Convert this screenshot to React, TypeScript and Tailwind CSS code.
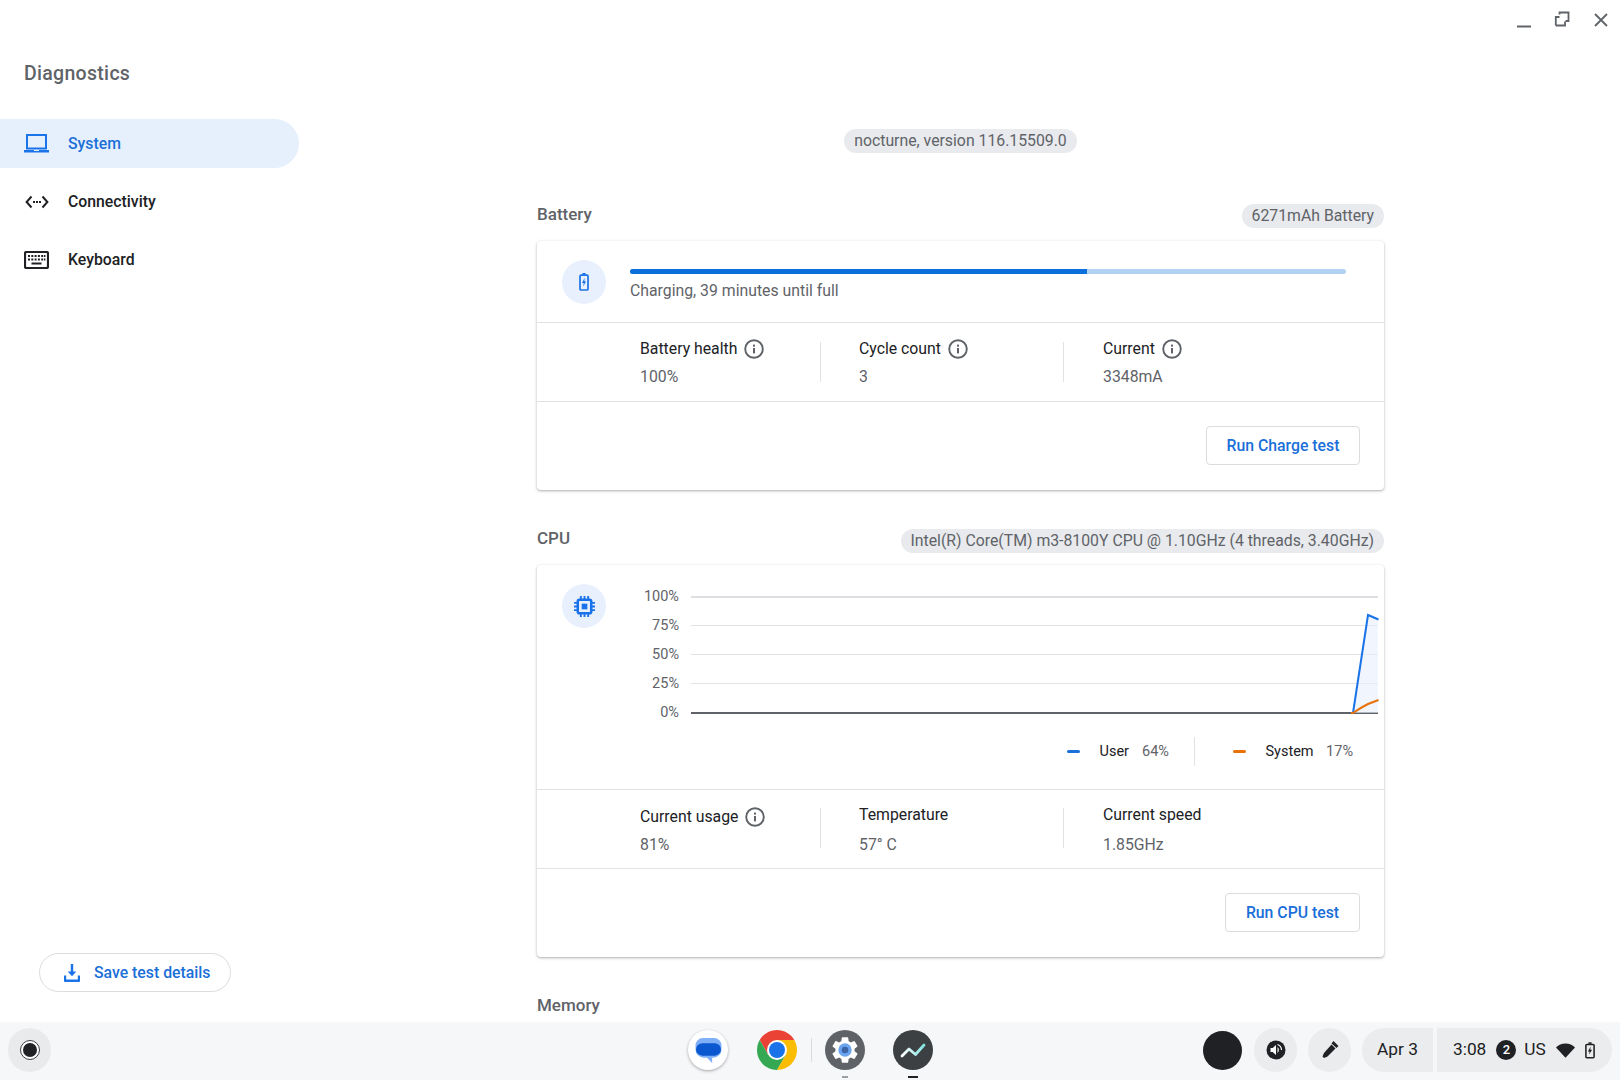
import React from "react";

const Info = ({ className = "" }: { className?: string }) => (
  <svg viewBox="0 0 20 20" className={`w-[20px] h-[20px] ${className}`} fill="none">
    <circle cx="10" cy="10" r="8.800" stroke="#5f6368" strokeWidth="1.900" />
    <rect x="9" y="9" width="2" height="5.400" fill="#5f6368" />
    <rect x="9" y="5.600" width="2" height="2" fill="#5f6368" />
  </svg>
);

const Stat = ({ label, value, info, w, labelShift, top }: { label: string; value: string; info?: boolean; w: string; labelShift?: boolean; top: string }) => (
  <div className={`${w} ${top} flex flex-col`}>
    <div className={`flex items-center gap-[7px] h-[20px] text-[15.8px] text-[#202124] ${labelShift ? "mt-[-2px] mb-[2px]" : ""}`}>
      <span>{label}</span>
      {info && <Info />}
    </div>
    <div className="mt-[8px] h-[20px] flex items-center text-[15.8px] text-[#5f6368]">{value}</div>
  </div>
);

const Rule = ({ className = "" }: { className?: string }) => <div className={`w-[1px] h-[40px] bg-[#e0e2e5] shrink-0 ${className}`} />;

const Chip = ({ children }: { children: React.ReactNode }) => (
  <div className="h-[24px] px-[10px] flex items-center rounded-full bg-[#e8eaed] text-[15.8px] text-[#5f6368]">{children}</div>
);

const RunButton = ({ children, w }: { children: React.ReactNode; w: string }) => (
  <div className={`${w} h-[39px] flex items-center justify-center rounded-[4px] border border-[#dadce0] bg-white text-[15.8px] font-medium text-[#1a6fd8]`}>
    {children}
  </div>
);

const IconCircle = ({ children }: { children: React.ReactNode }) => (
  <div className="w-[44px] h-[44px] rounded-full bg-[#e8f0fe] flex items-center justify-center shrink-0">{children}</div>
);

const Section = ({ title, chip, mt, shift }: { title: string; chip: string; mt: string; shift: string }) => (
  <div className={`${mt} h-[24px] flex items-center justify-between`}>
    <div className={`text-[17px] font-medium text-[#5f6368] ${shift}`}>{title}</div>
    <Chip>{chip}</Chip>
  </div>
);

const gridRows = [
  { l: "100%", c: "bg-[#dcdee1] h-[2px]" },
  { l: "75%", c: "bg-[#e0e2e5] h-[1px]" },
  { l: "50%", c: "bg-[#e0e2e5] h-[1px]" },
  { l: "25%", c: "bg-[#e0e2e5] h-[1px]" },
  { l: "0%", c: "bg-[#5f6368] h-[2px]" },
];

const NavItem = ({ icon, label, active }: { icon: React.ReactNode; label: string; active?: boolean }) => (
  <div className={`h-[49px] w-[299px] flex items-center pl-[24px] rounded-r-full text-[15.8px] font-medium ${active ? "bg-[#e6f0fc] text-[#1a6fd8]" : "text-[#202124]"}`}>
    <div className="w-[25px] h-[24px] flex items-center justify-center shrink-0">{icon}</div>
    <span className="ml-[19px] mt-[1px]">{label}</span>
  </div>
);

export default function App() {
  return (
    <div className="w-[1620px] h-[1080px] flex flex-col overflow-hidden bg-white font-[family-name:Roboto]">
      <div className="flex h-[1022px] overflow-hidden">
        {/* Sidebar */}
        <aside className="w-[300px] shrink-0 flex flex-col">
          <div className="pl-[24px] pt-[61px] h-[119px] text-[19.5px] font-medium text-[#5f6368] tracking-[0.3px] leading-[26px]">Diagnostics</div>
          <div className="flex flex-col gap-[9px]">
            <NavItem
              active
              label="System"
              icon={
                <svg viewBox="0 0 25 19" className="w-[25px] h-[19px]" fill="none">
                  <rect x="3" y="1" width="19" height="13.500" stroke="#1a73e8" strokeWidth="2" />
                  <path d="M0 16h10v1h5v-1h10v2.600H0z" fill="#1a73e8" />
                </svg>
              }
            />
            <NavItem
              label="Connectivity"
              icon={
                <svg viewBox="0 0 24 14" className="w-[24px] h-[14px]" fill="none">
                  <path d="M6.500 1.500 1.600 7l4.900 5.500M17.500 1.500 22.400 7l-4.900 5.500" stroke="#202124" strokeWidth="2" />
                  <rect x="8" y="6" width="2" height="2" fill="#202124" />
                  <rect x="11" y="6" width="2" height="2" fill="#202124" />
                  <rect x="14" y="6" width="2" height="2" fill="#202124" />
                </svg>
              }
            />
            <NavItem
              label="Keyboard"
              icon={
                <svg viewBox="0 0 25 18" className="w-[25px] h-[18px]" fill="none">
                  <rect x="1" y="1" width="23" height="16" rx="1.500" stroke="#202124" strokeWidth="2.200" />
                  <path d="M4 4h2v2H4zM7.300 4h2v2h-2zM10.600 4h2v2h-2zM13.900 4h2v2h-2zM17.200 4h2v2h-2zM20 4h1.400v2H20zM4 7.400h2v2H4zM7.300 7.400h2v2h-2zM10.600 7.400h2v2h-2zM13.900 7.400h2v2h-2zM17.200 7.400h2v2h-2zM20 7.400h1.400v2H20zM7.500 11.600h10v2h-10z" fill="#202124" />
                </svg>
              }
            />
          </div>
          <div className="mt-auto mb-[30px] ml-[39px] w-[192px] h-[39px] rounded-full border border-[#dadce0] flex items-center pl-[24px] text-[15.8px] font-medium text-[#1a6fd8]">
            <svg viewBox="0 0 16 18" className="w-[16px] h-[18px]" fill="#1a73e8">
              <path d="M6.800 0h2.400v7.600h3.100L8 12.300 3.700 7.600h3.100z" />
              <path d="M0 11.500h2.200v3.900h11.600v-3.900H16V17a1 1 0 0 1-1 1H1a1 1 0 0 1-1-1z" />
            </svg>
            <span className="ml-[14px]">Save test details</span>
          </div>
        </aside>

        {/* Main */}
        <main className="flex-1 flex flex-col">
          <div className="h-[34px] flex items-start justify-end pt-[12px] pr-[11px] shrink-0">
            <svg viewBox="0 0 16 16" className="w-[16px] h-[16px]" fill="none">
              <path d="M1 14.500h14" stroke="#5f6368" strokeWidth="2" />
            </svg>
            <svg viewBox="0 0 16 16" className="ml-[22px] mr-[1px] w-[16px] h-[16px] mt-[-1px]" fill="none">
              <path d="M5.500 3.500V1.500h9v8.500h-3" stroke="#5f6368" strokeWidth="1.800" />
              <path d="M1.800 14.500V6h3.700M1.800 14.500h9.200V10.500" stroke="#5f6368" strokeWidth="1.800" />
            </svg>
            <svg viewBox="0 0 16 16" className="ml-[22px] w-[16px] h-[16px]" fill="none">
              <path d="M2 2l12 12M14 2 2 14" stroke="#5f6368" strokeWidth="1.800" />
            </svg>
          </div>
          <div className="ml-[237px] w-[847px] flex flex-col">
            <div className="mt-[95px] flex justify-center">
              <Chip>nocturne, version 116.15509.0</Chip>
            </div>

            <Section title="Battery" chip="6271mAh Battery" mt="mt-[51px]" shift="mb-[2px]" />

            {/* Battery card */}
            <div className="mt-[13px] h-[249px] rounded-[4px] bg-white flex flex-col shadow-[0_1px_2px_rgba(60,64,67,0.3),0_1px_3px_1px_rgba(60,64,67,0.1)]">
              <div className="h-[82px] flex pl-[25px] pt-[19px] border-b border-[#e0e2e5] shrink-0">
                <IconCircle>
                  <svg viewBox="0 0 10 18" className="w-[10px] h-[18px]" fill="none">
                    <path d="M3.400 0h3.200v1.700H3.400z" fill="#1a73e8" />
                    <rect x="1" y="2.200" width="8" height="14.800" rx="1" stroke="#1a73e8" strokeWidth="1.700" />
                    <path d="M5.700 4.700 3 10h1.700l-.4 3.400L7 8.300H5.300z" fill="#1a73e8" />
                  </svg>
                </IconCircle>
                <div className="ml-[24px] w-[716px] pt-[9px]">
                  <div className="h-[5px] rounded-full bg-[#b1d2f2] overflow-hidden">
                    <div className="h-[5px] w-[457px] bg-[#0b6fdc]" />
                  </div>
                  <div className="mt-[7px] h-[20px] flex items-center text-[15.8px] text-[#5f6368]">Charging, 39 minutes until full</div>
                </div>
              </div>
              <div className="h-[79px] flex items-center pl-[103px] border-b border-[#e0e2e5] shrink-0">
                <Stat top="mt-[2px]" w="w-[180px]" label="Battery health" value="100%" info />
                <Rule />
                <div className="w-[38px]" />
                <Stat top="mt-[2px]" w="w-[204px]" label="Cycle count" value="3" info />
                <Rule />
                <div className="w-[39px]" />
                <Stat top="mt-[2px]" w="w-[200px]" label="Current" value="3348mA" info />
              </div>
              <div className="flex justify-end pr-[24px] pt-[24px]">
                <RunButton w="w-[154px]">Run Charge test</RunButton>
              </div>
            </div>

            <Section title="CPU" chip="Intel(R) Core(TM) m3-8100Y CPU @ 1.10GHz (4 threads, 3.40GHz)" mt="mt-[39px]" shift="mb-[4px]" />

            {/* CPU card */}
            <div className="mt-[12px] h-[392px] rounded-[4px] bg-white flex flex-col shadow-[0_1px_2px_rgba(60,64,67,0.3),0_1px_3px_1px_rgba(60,64,67,0.1)] shrink-0">
              <div className="h-[225px] flex flex-col border-b border-[#e0e2e5] shrink-0">
                <div className="flex pl-[25px] pt-[19px]">
                  <IconCircle>
                    <svg viewBox="0 0 20 20" className="w-[21px] h-[21px]" fill="none">
                      <rect x="3.600" y="3.600" width="12.800" height="12.800" rx="1.500" stroke="#1a73e8" strokeWidth="2.400" />
                      <rect x="7.300" y="7.300" width="5.400" height="5.400" fill="#1a73e8" />
                      <path d="M6.500 0v3M10 0v3M13.500 0v3M6.500 17v3M10 17v3M13.500 17v3M0 6.500h3M0 10h3M0 13.500h3M17 6.500h3M17 10h3M17 13.500h3" stroke="#1a73e8" strokeWidth="1.800" />
                    </svg>
                  </IconCircle>
                  <div className="relative ml-[19px] mt-[-2px] w-[772px] flex flex-col">
                    {gridRows.map((r) => (
                      <div key={r.l} className="h-[29px] flex items-center">
                        <div className="w-[54px] mt-[1.500px] text-right text-[14.5px] text-[#5f6368] shrink-0">{r.l}</div>
                        <div className={`ml-[12px] w-[687px] ${r.c}`} />
                      </div>
                    ))}
                    <svg viewBox="0 0 772 145" className="absolute left-0 top-0 w-[772px] h-[145px]" fill="none">
                      <path d="M728 131 L743 33 L753 37 V131 Z" fill="#e8f0fe" fillOpacity="0.6" />
                      <path d="M728 131 L743 33 L753.500 37.500" stroke="#1a73e8" strokeWidth="2" />
                      <path d="M726 131 H728 Q735 126 743 122 L753.500 118" stroke="#e8710a" strokeWidth="2" />
                    </svg>
                  </div>
                </div>
                <div className="flex justify-end items-center pr-[31px] h-[29px] mt-[10px] text-[14.5px]">
                  <div className="w-[13px] h-[3px] rounded-full bg-[#1a6fd8]" />
                  <span className="ml-[20px] text-[#202124]">User</span>
                  <span className="ml-[13px] text-[#5f6368]">64%</span>
                  <div className="ml-[25px] mr-[38px] w-[1px] h-[29px] bg-[#e0e2e5]" />
                  <div className="w-[13px] h-[3px] rounded-full bg-[#e8710a]" />
                  <span className="ml-[19.5px] text-[#202124]">System</span>
                  <span className="ml-[12.5px] text-[#5f6368]">17%</span>
                </div>
              </div>
              <div className="h-[79px] flex items-center pl-[103px] border-b border-[#e0e2e5] shrink-0">
                <Stat top="mt-[3px]" w="w-[180px]" label="Current usage" value="81%" info />
                <Rule className="mt-[-2px]" />
                <div className="w-[38px]" />
                <Stat top="mt-[3px]" w="w-[204px]" label="Temperature" value="57° C" labelShift />
                <Rule className="mt-[-2px]" />
                <div className="w-[39px]" />
                <Stat top="mt-[3px]" w="w-[200px]" label="Current speed" value="1.85GHz" labelShift />
              </div>
              <div className="flex justify-end pr-[24px] pt-[24px]">
                <RunButton w="w-[135px]">Run CPU test</RunButton>
              </div>
            </div>

            <div className="mt-[37px] text-[17px] font-medium text-[#5f6368] leading-[22px]">Memory</div>
          </div>
        </main>
      </div>

      {/* Shelf */}
      <footer className="h-[58px] shrink-0 bg-[#f6f7f9] flex items-start pt-[6px] relative">
        <div className="ml-[8px] w-[43px] h-[44px] rounded-full bg-[#e9eaec] flex items-center justify-center shrink-0">
          <div className="w-[20px] h-[20px] rounded-full border-[1.5px] border-[#3c4043] bg-white flex items-center justify-center">
            <div className="w-[14px] h-[14px] rounded-full bg-[#202124]" />
          </div>
        </div>

        <div className="ml-[637px] mt-[2px] flex items-center shrink-0">
          <div className="w-[40px] h-[40px] rounded-full bg-white shadow-[0_1px_3px_rgba(60,64,67,0.45)] flex items-center justify-center">
            <svg viewBox="0 0 26 24" className="w-[27px] h-[25px]">
              <path d="M7.500 0h11A7 7 0 0 1 25.500 7v4a8 8 0 0 1-8 8h-1v5L11.500 19H8.500A8 8 0 0 1 .500 11V7A7 7 0 0 1 7.500 0z" fill="#7fb0f7" />
              <path d="M7 5h12A6 6 0 0 1 25 11 6 6 0 0 1 19 17H7A6 6 0 0 1 1 11 6 6 0 0 1 7 5z" fill="#0b57d0" />
            </svg>
          </div>
          <svg viewBox="0 0 40 40" className="ml-[29px] w-[40px] h-[40px]">
            <path d="M37.300 10H20L11.300 25 2.700 10A20 20 0 0 1 37.300 10Z" fill="#ea4335" />
            <path d="M2.700 10 11.300 25H28.700L20 40A20 20 0 0 1 2.700 10Z" fill="#34a853" />
            <path d="M37.300 10H20L28.700 25 20 40A20 20 0 0 0 37.300 10Z" fill="#fbbc04" />
            <circle cx="20" cy="20" r="10" fill="#fff" />
            <circle cx="20" cy="20" r="8" fill="#1a73e8" />
          </svg>
          <div className="ml-[14px] w-[1px] h-[24px] bg-[#dadce0]" />
          <div className="ml-[13px] w-[40px] h-[40px] rounded-full bg-[#5f6368] flex items-center justify-center relative">
            <svg viewBox="0 0 24 24" className="w-[32px] h-[32px]">
              <path fill="#fff" d="M19.140 12.940c.04-.3.06-.61.06-.94 0-.32-.02-.64-.07-.94l2.030-1.580a.49.49 0 0 0 .12-.61l-1.920-3.320a.488.488 0 0 0-.59-.22l-2.390.96c-.5-.38-1.030-.7-1.620-.94l-.36-2.540a.484.484 0 0 0-.48-.41h-3.840c-.24 0-.43.17-.47.41l-.36 2.540c-.59.24-1.130.57-1.620.94l-2.390-.96c-.22-.08-.47 0-.59.22L2.740 8.870c-.12.21-.08.47.12.61l2.030 1.580c-.05.3-.09.63-.09.94s.02.64.07.94l-2.030 1.580a.49.49 0 0 0-.12.61l1.920 3.320c.12.22.37.29.59.22l2.390-.96c.5.38 1.030.7 1.620.94l.36 2.540c.05.24.24.41.48.41h3.840c.24 0 .44-.17.47-.41l.36-2.540c.59-.24 1.130-.56 1.620-.94l2.390.96c.22.08.47 0 .59-.22l1.920-3.320c.12-.22.07-.47-.12-.61l-2.010-1.580z" />
              <circle cx="12" cy="12" r="5" fill="#6ba3ee" />
              <circle cx="12" cy="12" r="2.500" fill="#3c64a8" />
            </svg>
            <div className="absolute top-[46px] left-[17px] w-[6px] h-[1.500px] bg-[#9aa0a6]" />
          </div>
          <div className="ml-[28px] w-[40px] h-[40px] rounded-full bg-[#3c4043] flex items-center justify-center relative">
            <svg viewBox="0 0 26 16" className="w-[26px] h-[16px]" fill="none">
              <defs>
                <linearGradient id="dg" x1="0" y1="0" x2="1" y2="0">
                  <stop offset="0" stopColor="#ffffff" />
                  <stop offset="1" stopColor="#7fe3e0" />
                </linearGradient>
              </defs>
              <path d="M2 14 9 7l6.500 5.500L24 3" stroke="url(#dg)" strokeWidth="2.800" strokeLinejoin="round" strokeLinecap="round" />
            </svg>
            <div className="absolute top-[46px] left-[15px] w-[10px] h-[2px] bg-[#202124]" />
          </div>
        </div>

        <div className="ml-auto flex items-center text-[#202124] shrink-0 pr-[8px]">
          <div className="w-[39px] h-[39px] rounded-full bg-[#202124] shrink-0" />
          <div className="ml-[12px] w-[43px] h-[44px] rounded-full bg-[#ebeced] flex items-center justify-center">
            <svg viewBox="0 0 20 20" className="w-[20px] h-[20px]">
              <circle cx="10" cy="10" r="9.500" fill="#202124" />
              <path d="M4.500 8h2.200l3.300-3v10l-3.300-3H4.500z" fill="#fff" />
              <path d="M11.500 7a4 4 0 0 1 0 6z" fill="#fff" />
              <path d="M11.500 4.500a6 6 0 0 1 4 5.500" stroke="#fff" strokeWidth="1.200" fill="none" />
            </svg>
          </div>
          <div className="ml-[11px] w-[43px] h-[44px] rounded-full bg-[#ebeced] flex items-center justify-center">
            <svg viewBox="0 0 18 18" className="w-[18px] h-[18px]">
              <path d="M10.500 3.500 14.500 7.500 6.500 15.500 3 17 1.500 15.500 3 12z" fill="#202124" />
              <path d="M12.500 0 17.500 5 15.500 7 10.500 2.500z" fill="#202124" />
            </svg>
          </div>
          <div className="ml-[11px] w-[71px] h-[44px] rounded-l-full rounded-r-[6px] bg-[#ebeced] flex items-center justify-center text-[17.3px]">Apr 3</div>
          <div className="ml-[4px] w-[175px] h-[44px] rounded-r-full rounded-l-[6px] bg-[#ebeced] flex items-center pl-[16px] text-[17.3px]">
            <span>3:08</span>
            <div className="ml-[10px] w-[20px] h-[20px] rounded-full bg-[#202124] text-white text-[13px] font-medium flex items-center justify-center">2</div>
            <span className="ml-[8px]">US</span>
            <svg viewBox="0 0 20 15" className="ml-[10px] w-[19px] h-[15px]">
              <path d="M10 15 0 4.300C2.500 1.700 6 .2 10 .2s7.500 1.500 10 4.100z" fill="#202124" />
            </svg>
            <svg viewBox="0 0 11 18" className="ml-[10px] w-[10px] h-[17px]" fill="none">
              <path d="M3.700 0h3.600v1.700H3.700z" fill="#202124" />
              <rect x="1" y="2.300" width="9" height="14.700" rx="1" stroke="#202124" strokeWidth="1.700" />
              <path d="M6.200 4.700 3.200 10H5l-.4 3.500L7.800 8.300H5.800z" fill="#202124" />
            </svg>
          </div>
        </div>
      </footer>
    </div>
  );
}
